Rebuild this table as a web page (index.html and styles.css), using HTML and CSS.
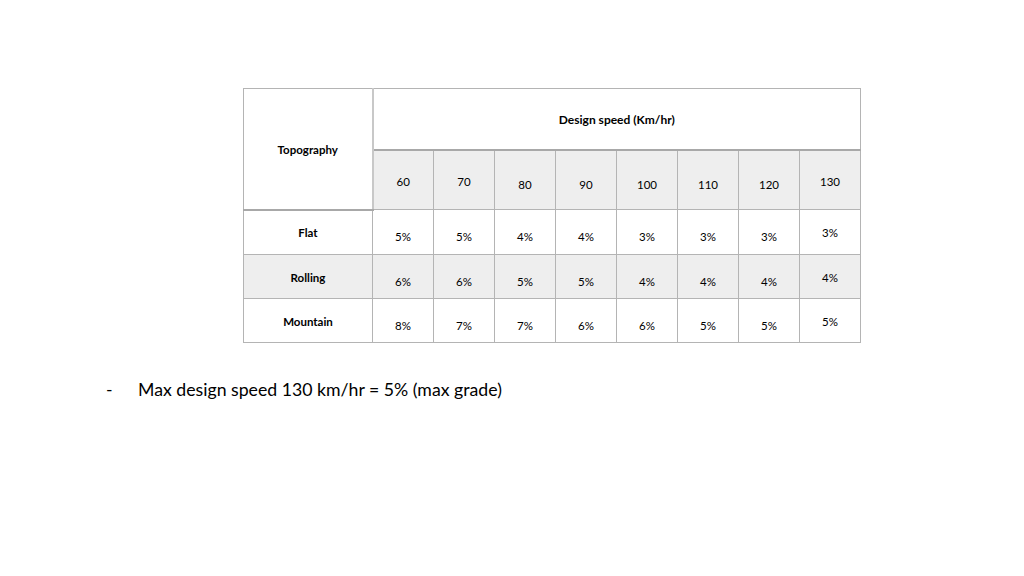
FILE: index.html
```html
<!DOCTYPE html>
<html>
<head>
<meta charset="utf-8">
<link rel="stylesheet" href="styles.css">
</head>
<body>
<div class="slide">
  <table class="grade">
    <colgroup>
      <col class="c-topo">
      <col class="c-sp"><col class="c-sp"><col class="c-sp"><col class="c-sp">
      <col class="c-sp"><col class="c-sp"><col class="c-sp"><col class="c-sp">
    </colgroup>
    <tr class="r-head1">
      <th class="topo" rowspan="2">Topography</th>
      <th class="design" colspan="8">Design speed (Km/hr)</th>
    </tr>
    <tr class="r-head2 shade">
      <td class="up">60</td><td class="up">70</td><td>80</td><td>90</td><td>100</td><td>110</td><td>120</td><td class="up">130</td>
    </tr>
    <tr class="r-data r-first">
      <th class="label">Flat</th>
      <td>5%</td><td>5%</td><td>4%</td><td>4%</td><td>3%</td><td>3%</td><td>3%</td><td class="up">3%</td>
    </tr>
    <tr class="r-data shade">
      <th class="label">Rolling</th>
      <td>6%</td><td>6%</td><td>5%</td><td>5%</td><td>4%</td><td>4%</td><td>4%</td><td class="up">4%</td>
    </tr>
    <tr class="r-data">
      <th class="label">Mountain</th>
      <td>8%</td><td>7%</td><td>7%</td><td>6%</td><td>6%</td><td>5%</td><td>5%</td><td class="up">5%</td>
    </tr>
  </table>
  <ul class="notes">
    <li><span class="dash">-</span><span>Max design speed 130 km/hr = 5% (max grade)</span></li>
  </ul>
</div>
</body>
</html>
```

FILE: styles.css
```css
html, body {
  margin: 0;
  padding: 0;
  background: #ffffff;
}
.slide {
  width: 1024px;
  height: 576px;
  padding-top: 88px;
  box-sizing: border-box;
  font-family: Lato, "Open Sans", sans-serif;
  color: #000;
}
.grade {
  margin-left: 243px;
  border-collapse: collapse;
  table-layout: fixed;
  width: 618px;
  font-size: 11.5px;
}
.c-topo { width: 129px; }
.c-sp { width: 61px; }
.grade th, .grade td {
  border: 1px solid #b4b4b4;
  text-align: center;
  vertical-align: middle;
  padding: 0;
}
.grade th { font-weight: bold; }
.grade th.design { font-size: 12px; padding-top: 2px; }
.r-head1 { height: 61px; }
.r-head2 { height: 60px; }
.r-head2 td {
  border-top: 2px solid #a8a8a8;
  padding-top: 10px;
}
.r-head2 td.up { padding-top: 4px; }
.topo {
  border-bottom: 2px solid #a8a8a8 !important;
  border-right: 2px solid #c8c8c8 !important;
  padding-top: 2px !important;
}
.r-data { height: 44px; }
.r-first { height: 45px; }
.r-data td { padding-top: 9px; }
.r-data td.up { padding-top: 1px; }
.r-data th.label { padding-top: 1px; }
.shade td, .shade th { background: #eeeeee; }
.r-head1 th { background: #fff; }
.notes {
  list-style: none;
  margin: 36px 0 0 0;
  padding: 0 0 0 106px;
  font-size: 17.7px;
}
.notes li {
  display: flex;
  align-items: baseline;
}
.dash {
  width: 32px;
}
```
